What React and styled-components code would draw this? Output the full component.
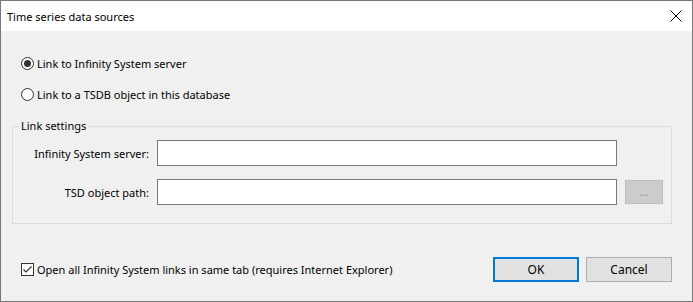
import React from "react";
import styled, { createGlobalStyle } from "styled-components";

const GlobalStyle = createGlobalStyle`
  html, body {
    margin: 0;
    padding: 0;
    background: #ffffff;
  }
  body {
    font-family: "Noto Sans", "Open Sans", sans-serif;
    font-size: 11px;
    color: #000;
  }
`;

const Window = styled.div`
  box-sizing: border-box;
  width: 693px;
  height: 302px;
  border: 1px solid #777777;
  display: flex;
  flex-direction: column;
  background: #f0f0f0;
`;

const TitleBar = styled.div`
  height: 30px;
  background: #ffffff;
  display: flex;
  align-items: center;
  justify-content: space-between;
  padding: 0 10px 0 6px;
  flex-shrink: 0;
`;

const Title = styled.span`
  font-size: 11px;
`;

const Body = styled.div`
  flex: 1;
  padding: 24px 20px 0 11px;
  display: flex;
  flex-direction: column;
`;

const OptionRow = styled.label`
  display: flex;
  align-items: center;
  height: 16px;
  margin-left: 9px;
  margin-top: ${props => props.gap || 0}px;
  gap: 3px;
`;

const Radio = styled.span`
  box-sizing: border-box;
  width: 13px;
  height: 13px;
  border-radius: 50%;
  border: 1px solid #333333;
  background: #ffffff;
  display: flex;
  align-items: center;
  justify-content: center;
  &::after {
    content: "";
    width: 7px;
    height: 7px;
    border-radius: 50%;
    background: ${props => (props.checked ? "#333333" : "transparent")};
  }
`;

const Group = styled.fieldset`
  margin: 16px 0 0 0;
  padding: 6px 0 18px 0;
  border: 1px solid #dcdcdc;
  min-width: 0;
`;

const Legend = styled.legend`
  margin-left: 6px;
  padding: 0 2px;
  line-height: 16px;
`;

const FieldGrid = styled.div`
  display: grid;
  grid-template-columns: 136px 460px 38px;
  column-gap: 8px;
  row-gap: 13px;
  align-items: center;
`;

const FieldLabel = styled.span`
  text-align: right;
`;

const TextInput = styled.input`
  box-sizing: border-box;
  height: 26px;
  width: 460px;
  border: 1px solid #7a7a7a;
  background: #ffffff;
  margin: 0;
  padding: 0 4px;
  font: inherit;
`;

const BrowseButton = styled.button`
  box-sizing: border-box;
  height: 24px;
  width: 38px;
  border: 1px solid #bfbfbf;
  background: #cccccc;
  color: #8a8a8a;
  font: inherit;
  padding: 0;
  line-height: 18px;
`;

const Footer = styled.div`
  margin-top: 33px;
  display: flex;
  align-items: center;
`;

const CheckRow = styled.label`
  display: flex;
  align-items: center;
  gap: 3px;
  margin-left: 9px;
  flex: 1;
`;

const CheckBox = styled.span`
  box-sizing: border-box;
  width: 13px;
  height: 13px;
  border: 1px solid #333333;
  background: #ffffff;
  display: flex;
  align-items: center;
  justify-content: center;
`;

const Buttons = styled.div`
  display: flex;
  gap: 7px;
`;

const DialogButton = styled.button`
  box-sizing: border-box;
  width: 86px;
  height: 25px;
  margin: 0;
  padding: 0;
  font: inherit;
  font-size: 12px;
  color: #000;
  background: #e1e1e1;
  border: ${props => (props.primary ? "2px solid #0078d7" : "1px solid #adadad")};
`;

const CloseIcon = () => (
  <svg width="12" height="12" viewBox="0 0 12 12">
    <path d="M0.5 0.5 L11.5 11.5 M11.5 0.5 L0.5 11.5" stroke="#000" strokeWidth="1" />
  </svg>
);

const CheckMark = () => (
  <svg width="11" height="11" viewBox="0 0 11 11">
    <path d="M1.5 5.5 L4 8 L9.5 2.5" fill="none" stroke="#333" strokeWidth="1.2" />
  </svg>
);

export default function App() {
  return (
    <>
      <GlobalStyle />
      <Window>
        <TitleBar>
          <Title>Time series data sources</Title>
          <CloseIcon />
        </TitleBar>
        <Body>
          <OptionRow>
            <Radio checked />
            Link to Infinity System server
          </OptionRow>
          <OptionRow gap={15}>
            <Radio />
            Link to a TSDB object in this database
          </OptionRow>
          <Group>
            <Legend>Link settings</Legend>
            <FieldGrid>
              <FieldLabel>Infinity System server:</FieldLabel>
              <TextInput />
              <span />
              <FieldLabel>TSD object path:</FieldLabel>
              <TextInput />
              <BrowseButton disabled>...</BrowseButton>
            </FieldGrid>
          </Group>
          <Footer>
            <CheckRow>
              <CheckBox>
                <CheckMark />
              </CheckBox>
              Open all Infinity System links in same tab (requires Internet Explorer)
            </CheckRow>
            <Buttons>
              <DialogButton primary>OK</DialogButton>
              <DialogButton>Cancel</DialogButton>
            </Buttons>
          </Footer>
        </Body>
      </Window>
    </>
  );
}
